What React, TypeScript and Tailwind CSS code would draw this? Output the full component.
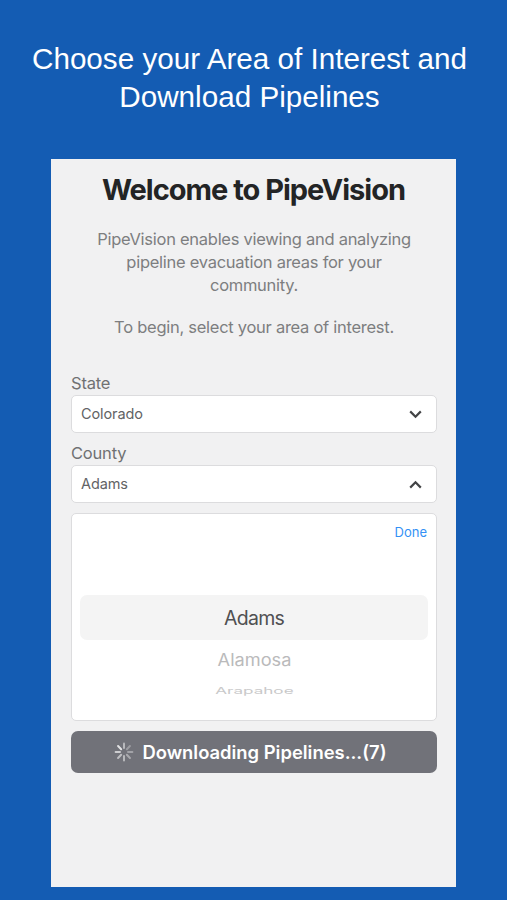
import React from 'react';

const SPOKES = [
  { angle: 0, opacity: 0.5 },
  { angle: 45, opacity: 0.3 },
  { angle: 90, opacity: 0.35 },
  { angle: 135, opacity: 0.4 },
  { angle: 180, opacity: 0.5 },
  { angle: 225, opacity: 0.55 },
  { angle: 270, opacity: 0.65 },
  { angle: 315, opacity: 0.8 },
];

function Spinner() {
  return (
    <svg width="20" height="20" viewBox="0 0 20 20" stroke="#fff" strokeWidth="2" strokeLinecap="round">
      {SPOKES.map((s) => (
        <line key={s.angle} x1="10" y1="1.6" x2="10" y2="6" opacity={s.opacity} transform={`rotate(${s.angle} 10 10)`} />
      ))}
    </svg>
  );
}

function Chevron({ up = false }: { up?: boolean }) {
  return (
    <svg width="13" height="9" viewBox="0 0 13 9" fill="none" stroke="#434446" strokeWidth="2.2">
      <path d={up ? 'M1.2 7.6 6.5 2.3l5.3 5.3' : 'M1.2 1.4 6.5 6.7l5.3-5.3'} />
    </svg>
  );
}

function Field({ label, value, open = false }: { label: string; value: string; open?: boolean }) {
  return (
    <div>
      <div className="h-[23px] text-[16.5px] leading-[22px] tracking-[-0.2px] text-[#707173]">{label}</div>
      <div className="flex h-[38px] items-center justify-between rounded-[5px] border border-[#dcdcde] bg-white pr-[14px] pl-[9px] text-[14.5px] tracking-[-0.1px] text-[#626365]">
        <span>{value}</span>
        <Chevron up={open} />
      </div>
    </div>
  );
}

export default function App() {
  return (
    <main className="flex h-[900px] w-[507px] flex-col items-center overflow-hidden bg-[#145cb3] font-[Inter,sans-serif] whitespace-nowrap">
      <h1 className="h-[159px] shrink-0 pt-[40px] pr-[8px] text-center font-['Liberation_Sans',sans-serif] text-[29.65px] leading-[38px] text-white">
        Choose your Area of Interest and
        <br />
        Download Pipelines
      </h1>

      <section className="h-[728px] w-[405px] shrink-0 bg-[#f1f1f2] pr-[19px] pl-[20px]">
        <h2 className="h-[69px] pt-[12px] pr-[1px] text-center text-[29px] leading-[38px] font-bold tracking-[-1px] text-[#232425]">
          Welcome to PipeVision
        </h2>
        <p className="text-center text-[16.5px] leading-[23px] tracking-[-0.27px] text-[#7d7e80]">
          PipeVision enables viewing and analyzing
          <br />
          pipeline evacuation areas for your
          <br />
          community.
        </p>
        <p className="mt-[19px] text-center text-[16.5px] leading-[23px] tracking-[-0.27px] text-[#7d7e80]">
          To begin, select your area of interest.
        </p>

        <div className="mt-[33px] flex flex-col gap-[9px]">
          <Field label="State" value="Colorado" />
          <Field label="County" value="Adams" open />
        </div>

        {/* County wheel */}
        <div className="mt-[10px] h-[208px] rounded-[5px] border border-[#dcdcde] bg-white px-[8px]">
          <div className="h-[81px] pt-[8px] pr-[1px] text-right text-[13px] leading-[20px] text-[#3391f5]">Done</div>
          <div className="h-[45px] rounded-[7px] bg-[#f4f4f4] text-center text-[19.5px] leading-[46px] tracking-[-0.7px] text-[#505052]">Adams</div>
          <div className="mt-[8px] text-center text-[17px] leading-[24px] text-[#bababb]">
            <span className="inline-block scale-x-[1.07] scale-y-[0.98]">Alamosa</span>
          </div>
          <div className="mt-[7px] text-center text-[15px] leading-[24px] text-[#c9c9ca]">
            <span className="inline-block scale-x-[1.14] scale-y-[0.6]">Arapahoe</span>
          </div>
        </div>

        <button className="mt-[10px] flex h-[42px] w-full items-center justify-center gap-[8px] rounded-[7px] bg-[#717279] pr-[7px] text-[18.4px] font-semibold text-white">
          <Spinner />
          <span className="pt-[2px]">Downloading Pipelines...(7)</span>
        </button>
      </section>
    </main>
  );
}
